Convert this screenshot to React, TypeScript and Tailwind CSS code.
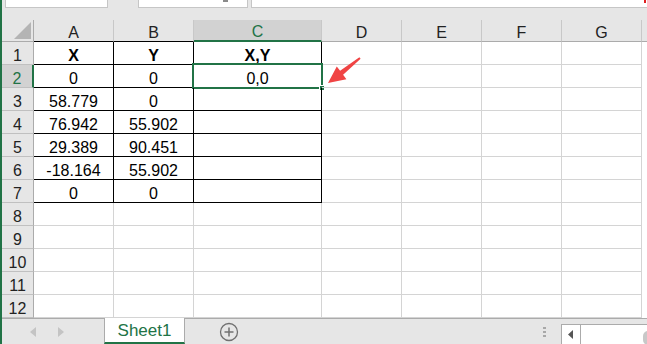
import React from "react";

const colWidths = ["w-[80px]", "w-[80px]", "w-[128px]", "w-[80px]", "w-[80px]", "w-[80px]", "w-[80px]"];
const colLetters = ["A", "B", "C", "D", "E", "F", "G"];

const data: string[][] = [
  ["X", "Y", "X,Y"],
  ["0", "0", "0,0"],
  ["58.779", "0", ""],
  ["76.942", "55.902", ""],
  ["29.389", "90.451", ""],
  ["-18.164", "55.902", ""],
  ["0", "0", ""],
];

function ColHeader() {
  return (
    <div className="flex h-[22px] shrink-0">
      <div className="w-[32px] h-full shrink-0 bg-[#e6e6e6] border-r border-b border-[#ababab] flex items-end justify-end pr-[2px] pb-[2px]">
        <svg width="17" height="17" viewBox="0 0 17 17">
          <polygon points="17,0 17,17 0,17" fill="#b4b4b4" />
        </svg>
      </div>
      {colLetters.map((c, i) => {
        const sel = i === 2;
        const bottom =
          i === 2
            ? "border-b-2 border-b-[#217346]"
            : i < 2
            ? "border-b border-b-black"
            : "border-b border-b-[#ababab]";
        return (
          <div
            key={c}
            className={`${colWidths[i]} h-full shrink-0 flex items-center justify-center border-r border-r-[#c8c8c8] ${bottom} ${
              sel ? "bg-[#d2d2d2] text-[#217346]" : "bg-[#e6e6e6] text-[#222]"
            } text-[16px] leading-none pt-[4px]`}
          >
            {c}
          </div>
        );
      })}
      <div className="flex-1 h-full bg-[#e6e6e6] border-b border-[#ababab]" />
    </div>
  );
}

function Row({ r }: { r: number }) {
  const sel = r === 2;
  const rowData = data[r - 1];
  return (
    <div className="flex h-[23px] shrink-0">
      <div
        className={`w-[32px] h-full shrink-0 flex items-center justify-center text-[16px] leading-none pt-[5px] border-b border-b-[#c0c0c0] ${
          sel
            ? "bg-[#d2d2d2] text-[#217346] border-r-2 border-r-[#217346]"
            : "bg-[#e6e6e6] text-[#222] border-r border-r-[#ababab]"
        }`}
      >
        {r}
      </div>
      {colLetters.map((c, i) => {
        const inTable = r <= 7 && i <= 2;
        const border = inTable ? "border-r border-b border-black" : "border-r border-b border-[#d4d4d4]";
        const text = rowData ? rowData[i] ?? "" : "";
        const bold = r === 1;
        const isSel = sel && i === 2;
        return (
          <div
            key={c}
            className={`${colWidths[i]} h-full shrink-0 relative flex items-center justify-center ${border} text-[16px] leading-none pt-[6px] text-black ${
              bold ? "font-bold" : ""
            }`}
          >
            {text}
            {isSel && (
              <>
                <div className="absolute left-[-2px] top-[-2px] right-[-2px] bottom-[-2px] border-2 border-[#217346]" />
                <div className="absolute right-[-4px] bottom-[-4px] w-[6px] h-[6px] bg-[#217346] border border-white" />
              </>
            )}
          </div>
        );
      })}
      <div className="flex-1 h-full" />
    </div>
  );
}

function Toolbar() {
  return (
    <div className="h-[20px] shrink-0 bg-[#e6e6e6] relative flex items-start">
      <div className="ml-[3px] w-[103px] h-[8px] bg-white border border-t-0 border-[#c6c6c6]" />
      <div className="ml-[30px] w-[110px] h-[8px] bg-white border border-t-0 border-[#c6c6c6] relative">
        <div className="absolute left-[84px] top-0 w-[5px] h-[2px] bg-[#8a8a8a]" />
      </div>
      <div className="ml-[3px] flex-1 h-[8px] bg-white border border-t-0 border-r-0 border-[#c6c6c6] relative">
        <div className="absolute right-[1px] top-0 w-[2px] h-[3px] bg-[#e02020]" />
      </div>
    </div>
  );
}

function TabBar() {
  return (
    <div className="h-[26px] shrink-0 bg-[#e6e6e6] border-t border-[#ababab] flex items-stretch relative">
      <div className="w-[102px] flex items-center">
        <svg width="8" height="10" viewBox="0 0 8 10" className="ml-[27px]">
          <polygon points="7,0 7,10 1,5" fill="#c4c4c4" />
        </svg>
        <svg width="8" height="10" viewBox="0 0 8 10" className="ml-[20px]">
          <polygon points="1,0 1,10 7,5" fill="#c4c4c4" />
        </svg>
      </div>
      <div className="w-[81px] mt-[-1px] bg-white border-l border-r border-[#ababab] border-b-2 border-b-[#217346] flex items-center justify-center text-[17px] leading-none text-[#217346] pt-[1px]">
        Sheet1
      </div>
      <div className="ml-[34px] flex items-center">
        <svg width="20" height="20" viewBox="0 0 20 20">
          <circle cx="10" cy="10" r="8.5" fill="none" stroke="#707070" strokeWidth="1.3" />
          <line x1="5.5" y1="10" x2="14.5" y2="10" stroke="#707070" strokeWidth="1.5" />
          <line x1="10" y1="5.5" x2="10" y2="14.5" stroke="#707070" strokeWidth="1.5" />
        </svg>
      </div>
      <div className="flex-1" />
      <div className="flex flex-col gap-[2px] justify-center mr-[15px]">
        <div className="w-[3px] h-[2px] bg-[#a8a8a8]" />
        <div className="w-[3px] h-[2px] bg-[#a8a8a8]" />
        <div className="w-[3px] h-[2px] bg-[#a8a8a8]" />
      </div>
      <div className="w-[86px] mt-[5px] bg-white border border-r-0 border-b-0 border-[#ababab] flex">
        <div className="w-[19px] border-r border-[#ababab] flex items-center justify-center">
          <svg width="6" height="9" viewBox="0 0 6 9">
            <polygon points="5,0 5,9 0,4.5" fill="#555" />
          </svg>
        </div>
        <div className="flex-1 relative">
          <div className="absolute right-[-6px] top-[6px] w-[10px] h-[14px] rounded-full bg-[#c8c8c8]" />
        </div>
      </div>
    </div>
  );
}

export default function App() {
  return (
    <div className="w-[647px] h-[344px] overflow-hidden bg-white flex relative font-['Liberation_Sans',sans-serif]">
      <div className="w-[2px] h-full bg-[#217346] shrink-0" />
      <div className="flex-1 flex flex-col min-w-0">
        <Toolbar />
        <ColHeader />
        {Array.from({ length: 12 }, (_, k) => (
          <Row key={k} r={k + 1} />
        ))}
        <TabBar />
      </div>
      <svg className="absolute left-[324px] top-[54px]" width="40" height="34" viewBox="324 54 40 34">
        <polygon
          points="328,83 336.8,66.4 340.1,70.8 359.4,57.2 360.6,58.8 343.1,74.8 346.4,79.2"
          fill="#f04444"
        />
      </svg>
    </div>
  );
}
